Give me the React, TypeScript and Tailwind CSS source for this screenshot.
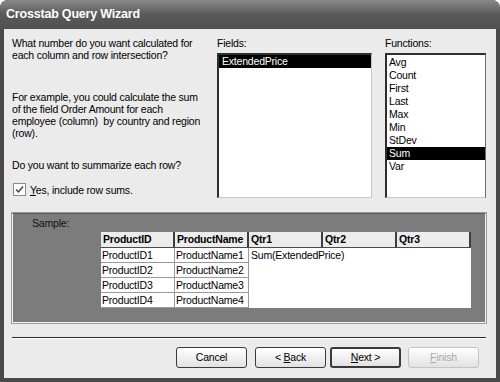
import React from "react"

const functions = ["Avg", "Count", "First", "Last", "Max", "Min", "StDev", "Sum", "Var"]
const rows = [
  ["ProductID1", "ProductName1"],
  ["ProductID2", "ProductName2"],
  ["ProductID3", "ProductName3"],
  ["ProductID4", "ProductName4"],
]

function WizButton({ children, primary, disabled }: { children: React.ReactNode; primary?: boolean; disabled?: boolean }) {
  return (
    <div
      className={`w-[71px] h-[21px] flex items-center justify-center rounded-[3px] bg-gradient-to-b from-white to-[#e2e2e2] ${
        disabled ? "border border-[#c4c4c4] text-[#a8a8a8]" : primary ? "border-2 border-[#3a3a3a] text-black" : "border border-[#3a3a3a] text-black"
      }`}
    >
      <span className="whitespace-pre">{children}</span>
    </div>
  )
}

export default function App() {
  return (
    <div className="w-[500px] h-[382px] flex flex-col bg-[#4a4a4a] rounded-t-[8px] overflow-hidden font-['Liberation_Sans',Arial,sans-serif] text-[10.5px] tracking-[-0.2px] text-black">
      {/* Title bar */}
      <div className="h-[29px] flex items-center px-[6px] bg-gradient-to-b from-[#8a8a8a] via-[#5a5a5a] to-[#505050]">
        <span className="text-white font-bold text-[12.5px] tracking-[-0.2px]">Crosstab Query Wizard</span>
      </div>

      {/* Client area */}
      <div className="flex-1 mx-[4px] mb-[4px] bg-[#ebebeb] flex flex-col pl-[8px] pr-[10px] pt-[8px]">
        <div className="flex h-[169px]">
          {/* Left text */}
          <div className="w-[205px] leading-[12px] whitespace-nowrap">
            <p>What number do you want calculated for<br />each column and row intersection?</p>
            <p className="mt-[30px]">
              For example, you could calculate the sum
              <br />of the field Order Amount for each
              <br />employee (column)&nbsp; by country and region
              <br />(row).
            </p>
            <p className="mt-[20px]">Do you want to summarize each row?</p>
            <div className="flex items-center mt-[12px] ml-[1px]">
              <div className="w-[13px] h-[13px] border border-[#8a8a8a] bg-white flex items-center justify-center">
                <svg width="9" height="9" viewBox="0 0 9 9">
                  <path d="M1 4.5 L3.5 7 L8 1.5" fill="none" stroke="#444" strokeWidth="1.5" />
                </svg>
              </div>
              <span className="ml-[4px]">
                <u>Y</u>es, include row sums.
              </span>
            </div>
          </div>

          {/* Fields */}
          <div className="w-[155px] flex flex-col">
            <div className="leading-[12px]">Fields:</div>
            <div className="mt-[4px] h-[145px] bg-white border-t-2 border-l-2 border-[#2e2e2e] border-r border-b border-r-[#c8c8c8] border-b-[#c8c8c8]">
              <div className="h-[13px] bg-black text-white leading-[13px] pl-[3px]">ExtendedPrice</div>
            </div>
          </div>

          {/* Functions */}
          <div className="w-[101px] ml-[13px] flex flex-col">
            <div className="leading-[12px]">Functions:</div>
            <div className="mt-[4px] h-[145px] bg-white border-t-2 border-l-2 border-[#2e2e2e] border-r border-b border-r-[#6a6a6a] border-b-[#c8c8c8] pt-[1px]">
              {functions.map((f) => (
                <div key={f} className={`h-[13px] leading-[13px] pl-[2px] ${f === "Sum" ? "bg-black text-white" : ""}`}>
                  {f}
                </div>
              ))}
            </div>
          </div>
        </div>

        {/* Sample panel */}
        <div className="mt-[7px] h-[110px] bg-[#7c7c7c] border border-t-[#5a5a5a] border-l-[#f4f4f4] border-b-[#f4f4f4] border-r-[#f4f4f4] outline outline-1 outline-[#9a9a9a] flex flex-col">
          <div className="pl-[19px] pt-[3px] leading-[12px] text-[#111]">Sample:</div>
          <div className="ml-[88px] mt-[3px] w-[370px] flex flex-col">
            <div className="flex h-[16px] bg-[#ececec] border-b border-[#4a4a4a] font-bold">
              {["ProductID", "ProductName", "Qtr1", "Qtr2", "Qtr3"].map((h) => (
                <div key={h} className="w-[74px] border-r-2 border-[#3e3e3e] pl-[2px] leading-[15px] overflow-hidden whitespace-nowrap">
                  {h}
                </div>
              ))}
            </div>
            <div className="flex">
              <div className="flex flex-col">
                {rows.map((r) => (
                  <div key={r[0]} className="flex h-[15px] bg-white border-b border-[#9a9a9a]">
                    <div className="w-[74px] border-r border-[#9a9a9a] pl-[1px] leading-[14px]">{r[0]}</div>
                    <div className="w-[74px] border-r border-[#9a9a9a] pl-[1px] leading-[14px]">{r[1]}</div>
                  </div>
                ))}
              </div>
              <div className="w-[222px] h-[60px] bg-white pl-[2px] leading-[14px]">Sum(ExtendedPrice)</div>
            </div>
          </div>
        </div>

        {/* Separator */}
        <div className="mt-[14px] h-[2px] border-t border-[#2a2a2a] border-b border-b-white" />

        {/* Buttons */}
        <div className="flex justify-end mt-[8px] pr-[7px]">
          <WizButton>Cancel</WizButton>
          <div className="ml-[8px]">
            <WizButton>
              {"< "}
              <u>B</u>ack
            </WizButton>
          </div>
          <div className="ml-[4px]">
            <WizButton primary>
              <u>N</u>ext {">"}
            </WizButton>
          </div>
          <div className="ml-[7px]">
            <WizButton disabled>
              <u>F</u>inish
            </WizButton>
          </div>
        </div>
      </div>
    </div>
  )
}
